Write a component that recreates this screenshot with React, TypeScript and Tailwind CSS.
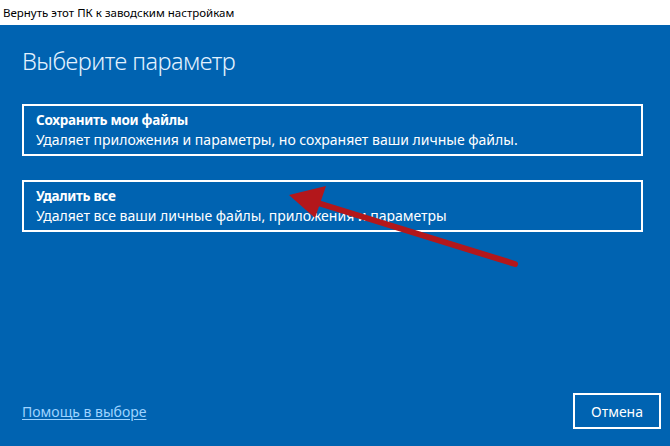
import React from "react";

const options = [
  {
    title: "Сохранить мои файлы",
    desc: "Удаляет приложения и параметры, но сохраняет ваши личные файлы.",
  },
  {
    title: "Удалить все",
    desc: "Удаляет все ваши личные файлы, приложения и параметры",
  },
];

function Arrow() {
  return (
    <svg
      className="absolute left-0 top-0 pointer-events-none"
      width="670"
      height="446"
      viewBox="0 0 670 446"
    >
      <line x1="515" y1="264" x2="318" y2="203" stroke="#b3171b" strokeWidth="6" strokeLinecap="round" />
      <polygon points="289,195 326,186 315,218" fill="#b3171b" />
    </svg>
  );
}

export default function App() {
  return (
    <div className="relative w-[670px] h-[446px] flex flex-col overflow-hidden font-['Noto_Sans',sans-serif]">
      <div className="h-[25px] bg-white flex items-center pl-[3px] text-[11.5px] text-black">
        Вернуть этот ПК к заводским настройкам
      </div>

      <div className="flex-1 bg-[#0063b1] flex flex-col pl-[22px] pr-[9px] pb-[17px]">
        <h1 className="mt-[18px] text-[23.5px] leading-[36px] font-light tracking-[-0.5px] text-[#e3f2ff]">
          Выберите параметр
        </h1>

        <div className="mt-[25px] flex flex-col gap-[24px]">
          {options.map((o) => (
            <div
              key={o.title}
              className="w-[621px] border-2 border-white pl-[12px] pt-[4px] pb-[4px] text-white"
            >
              <div className="text-[13.5px] leading-[20px] font-bold tracking-[-0.3px]">{o.title}</div>
              <div className="text-[14px] leading-[20px]">{o.desc}</div>
            </div>
          ))}
        </div>

        <div className="mt-auto flex items-center justify-between">
          <a className="text-[14px] text-[#9ed3ff] underline underline-offset-2 cursor-pointer">
            Помощь в выборе
          </a>
          <button className="w-[88px] h-[36px] border-2 border-white text-white text-[14px]">
            Отмена
          </button>
        </div>
      </div>

      <Arrow />
    </div>
  );
}
